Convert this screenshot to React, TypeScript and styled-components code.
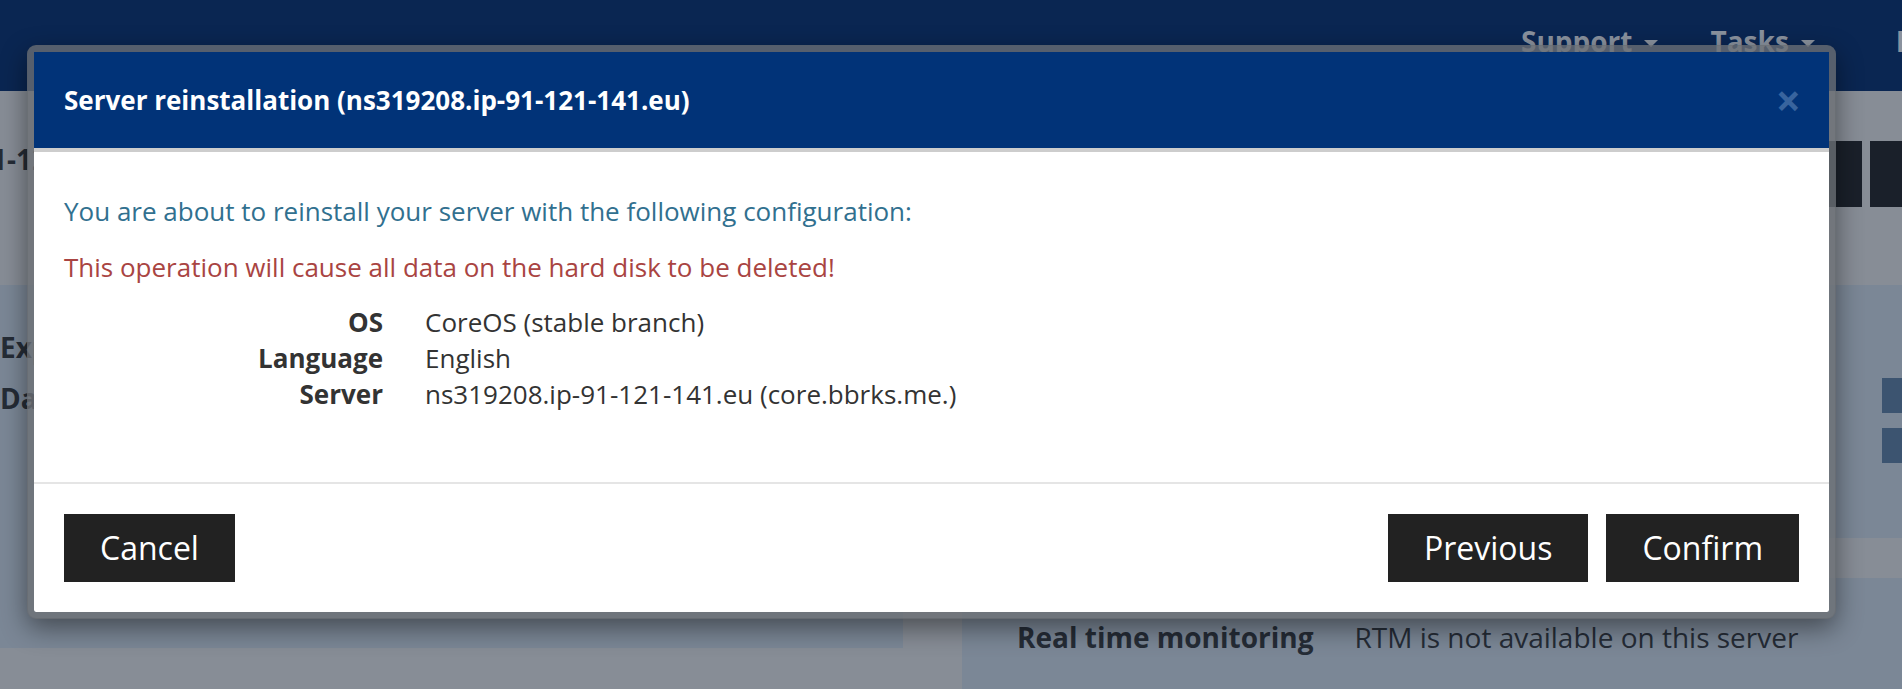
import React from 'react';
import styled, { createGlobalStyle } from 'styled-components';

const GlobalStyle = createGlobalStyle`
  html, body {
    margin: 0;
    padding: 0;
  }
  body {
    background: #878d96;
    font-family: 'Open Sans', 'DejaVu Sans', sans-serif;
    overflow: hidden;
  }
`;

const Page = styled.div`
  position: relative;
  width: 1902px;
  height: 689px;
  overflow: hidden;
  background: #878d96;
  display: flex;
  flex-direction: column;
`;

const TopNav = styled.nav`
  height: 91px;
  flex-shrink: 0;
  box-sizing: border-box;
  background: #0a2652;
  display: flex;
  align-items: flex-start;
  padding: 21px 0 0 1495px;
  white-space: nowrap;
`;

const NavItem = styled.span<{ $push?: number }>`
  display: flex;
  align-items: center;
  gap: 12px;
  padding: 0 26px;
  margin-left: ${p => p.$push || 0}px;
  font-size: 28px;
  line-height: 40px;
  font-weight: 700;
  color: #8a929e;
`;

const Caret = styled.span`
  width: 0;
  height: 0;
  margin-top: 5px;
  border-left: 7px solid transparent;
  border-right: 7px solid transparent;
  border-top: 7px solid #8a929e;
`;

const TitleBar = styled.div`
  height: 194px;
  flex-shrink: 0;
  box-sizing: border-box;
  display: flex;
  justify-content: space-between;
  align-items: flex-start;
  padding-top: 48px;
`;

const PageHeading = styled.h1`
  margin: 0 0 0 -9px;
  font-size: 28px;
  line-height: 40px;
  font-weight: 700;
  color: #252c36;
`;

const Toolbar = styled.div`
  display: flex;
  gap: 8px;
  margin-top: 2px;
  margin-right: -60px;
`;

const ToolButton = styled.div`
  width: 92px;
  height: 66px;
  background: #1a202a;
`;

const Columns = styled.div`
  flex: 1;
  display: grid;
  grid-template-columns: 903px 1fr;
  column-gap: 59px;
`;

const LeftPanel = styled.div`
  height: 363px;
  box-sizing: border-box;
  background: #7b8796;
  padding-top: 42px;
  display: flex;
  flex-direction: column;
  gap: 11px;
`;

const PanelLabel = styled.div`
  font-size: 28px;
  line-height: 40px;
  font-weight: 700;
  color: #252c36;
  white-space: nowrap;
`;

const RightColumn = styled.div`
  display: flex;
  flex-direction: column;
  gap: 40px;
`;

const ActionsPanel = styled.div`
  height: 253px;
  box-sizing: border-box;
  background: #7b8796;
  padding-top: 93px;
  display: flex;
  flex-direction: column;
  align-items: flex-end;
  gap: 15px;
`;

const SmallAction = styled.div`
  width: 20px;
  height: 35px;
  background: #3c5470;
`;

const InfoPanel = styled.div`
  flex: 1;
  background: #7b8796;
  padding: 39px 0 0 55px;
  display: grid;
  grid-template-columns: auto auto;
  justify-content: start;
  column-gap: 41px;
  align-content: start;
  font-size: 28px;
  line-height: 40px;
  color: #252c36;
`;

const InfoLabel = styled.span`
  font-weight: 700;
`;

const Modal = styled.div`
  position: absolute;
  left: 27px;
  top: 45px;
  width: 1795px;
  border: 7px solid rgba(108, 111, 117, 0.78);
  border-radius: 9px;
  background: #fff;
  background-clip: padding-box;
  box-shadow: 0 9px 27px rgba(0, 0, 0, 0.45);
  font-family: 'Open Sans', 'DejaVu Sans', sans-serif;
`;

const ModalHeader = styled.div`
  height: 100px;
  box-sizing: border-box;
  background: #013378;
  border-bottom: 4px solid #cdcdcd;
  display: flex;
  align-items: center;
  justify-content: space-between;
  padding: 0 28px 0 30px;
`;

const ModalTitle = styled.h4`
  margin: 0;
  font-size: 26px;
  line-height: 36px;
  font-weight: 700;
  color: #fff;
`;

const CloseButton = styled.button`
  border: none;
  background: none;
  padding: 0;
  font-family: inherit;
  font-size: 44px;
  line-height: 36px;
  font-weight: 700;
  color: #38649e;
  cursor: pointer;
`;

const ModalBody = styled.div`
  padding: 41px 30px 70px;
  font-size: 26px;
  line-height: 36px;
  color: #333;
`;

const Message = styled.p<{ $tone: 'info' | 'danger' }>`
  margin: 0 0 ${p => (p.$tone === 'info' ? 20 : 19)}px;
  color: ${p => (p.$tone === 'info' ? '#31708f' : '#a94442')};
`;

const Details = styled.dl`
  margin: 0;
  display: grid;
  grid-template-columns: 319px auto;
  column-gap: 42px;
`;

const Term = styled.dt`
  font-weight: 700;
  text-align: right;
  color: #333;
`;

const Value = styled.dd`
  margin: 0;
`;

const ModalFooter = styled.div`
  border-top: 2px solid #e5e5e5;
  padding: 30px;
  display: flex;
  justify-content: space-between;
`;

const ButtonGroup = styled.div`
  display: flex;
  gap: 18px;
`;

const Button = styled.button`
  height: 68px;
  padding: 0 36px;
  border: none;
  border-radius: 0;
  background: #222;
  color: #fff;
  font-family: inherit;
  font-size: 32px;
  line-height: 68px;
  cursor: pointer;
`;

const details = [
  { term: 'OS', value: 'CoreOS (stable branch)' },
  { term: 'Language', value: 'English' },
  { term: 'Server', value: 'ns319208.ip-91-121-141.eu (core.bbrks.me.)' },
];

export default function App() {
  return (
    <>
      <GlobalStyle />
      <Page>
        <TopNav>
          <NavItem>
            Support <Caret />
          </NavItem>
          <NavItem>
            Tasks <Caret />
          </NavItem>
          <NavItem $push={29}>
            Billing <Caret />
          </NavItem>
        </TopNav>
        <TitleBar>
          <PageHeading>1-121-141.eu</PageHeading>
          <Toolbar>
            <ToolButton />
            <ToolButton />
          </Toolbar>
        </TitleBar>
        <Columns>
          <LeftPanel>
            <PanelLabel>Expiration</PanelLabel>
            <PanelLabel>Datacenter</PanelLabel>
          </LeftPanel>
          <RightColumn>
            <ActionsPanel>
              <SmallAction />
              <SmallAction />
            </ActionsPanel>
            <InfoPanel>
              <InfoLabel>Real time monitoring</InfoLabel>
              <span>RTM is not available on this server</span>
            </InfoPanel>
          </RightColumn>
        </Columns>

        <Modal>
          <ModalHeader>
            <ModalTitle>Server reinstallation (ns319208.ip-91-121-141.eu)</ModalTitle>
            <CloseButton aria-label="Close">×</CloseButton>
          </ModalHeader>
          <ModalBody>
            <Message $tone="info">
              You are about to reinstall your server with the following configuration:
            </Message>
            <Message $tone="danger">
              This operation will cause all data on the hard disk to be deleted!
            </Message>
            <Details>
              {details.map(d => (
                <React.Fragment key={d.term}>
                  <Term>{d.term}</Term>
                  <Value>{d.value}</Value>
                </React.Fragment>
              ))}
            </Details>
          </ModalBody>
          <ModalFooter>
            <Button>Cancel</Button>
            <ButtonGroup>
              <Button>Previous</Button>
              <Button>Confirm</Button>
            </ButtonGroup>
          </ModalFooter>
        </Modal>
      </Page>
    </>
  );
}
